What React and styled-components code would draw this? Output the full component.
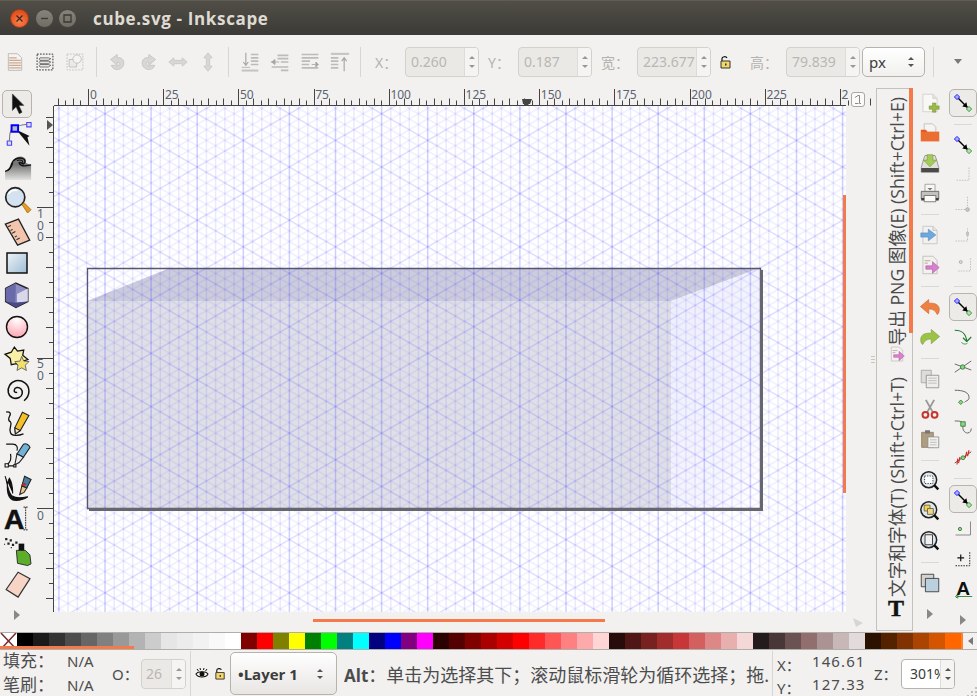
import React from "react";
import styled, { createGlobalStyle } from "styled-components";

const GlobalStyle = createGlobalStyle`
  html, body {
    margin: 0;
    width: 977px;
    height: 696px;
    overflow: hidden;
    background: #f2f1f0;
  }
`;

const UI = '"Open Sans", "Noto Sans CJK SC", sans-serif';
const CJK = '"Noto Sans", "Noto Sans CJK SC", sans-serif';
const COLON = "\uFF1A";
const SEMI = "\uFF1B";

const Window = styled.div`
  width: 977px;
  height: 696px;
  display: flex;
  flex-direction: column;
  overflow: hidden;
  background: #f2f1f0;
  color: #4c4c4c;
  font-family: ${CJK};
`;

const TitleBar = styled.div`
  height: 35px;
  flex: none;
  display: flex;
  align-items: center;
  padding-left: 10px;
  box-sizing: border-box;
  border-top: 1px solid #5f5c52;
  background: linear-gradient(#504e46, #3b3a36);
`;

const WinButton = styled.div`
  width: 19px;
  height: 19px;
  border-radius: 50%;
  margin-right: ${(p) => p.$gap}px;
  display: flex;
  align-items: center;
  justify-content: center;
  box-sizing: border-box;
  border: 1px solid ${(p) => (p.$close ? "#a83a18" : "#46453f")};
  background: ${(p) =>
    p.$close
      ? "radial-gradient(circle at 50% 70%, #f8804e, #e2501f 70%)"
      : "linear-gradient(#85837a, #6f6d64)"};
`;

const Title = styled.div`
  margin-left: 6px;
  color: #dfdbd2;
  font: 700 17px ${UI};
  letter-spacing: 0.65px;
`;

const CommandBar = styled.div`
  height: 53px;
  flex: none;
  display: flex;
  align-items: center;
`;

const TopTool = styled.div`
  width: ${(p) => p.$w || 30}px;
  height: 30px;
  flex: none;
  display: flex;
  align-items: center;
  justify-content: center;
`;

const VSep = styled.div`
  width: 1px;
  height: ${(p) => p.$h || 30}px;
  flex: none;
  margin: 0 ${(p) => p.$r}px 0 ${(p) => p.$l}px;
  background: #d8d6d2;
`;

const Label = styled.div`
  flex: none;
  width: ${(p) => p.$w}px;
  margin-left: ${(p) => p.$ml || 0}px;
  color: ${(p) => (p.$on ? "#4c4c4c" : "#b4b2ae")};
  font-size: ${(p) => (p.$on ? 15 : 14)}px;
  white-space: nowrap;
`;

const Spin = styled.div`
  flex: none;
  display: flex;
  width: ${(p) => p.$w}px;
  height: 30px;
  box-sizing: border-box;
  border: 1px solid ${(p) => (p.$on ? "#b6b3ad" : "#d3d1cc")};
  border-radius: 4px;
  overflow: hidden;
  background: ${(p) => (p.$on ? "#fff" : "#ebe9e6")};
`;

const SpinValue = styled.div`
  flex: 1;
  min-width: 0;
  overflow: hidden;
  white-space: nowrap;
  padding-left: ${(p) => p.$pl || 5}px;
  line-height: 28px;
  font-size: 14px;
  color: ${(p) => (p.$on ? "#3c3c3c" : "#b9b7b3")};
`;

const SpinArrows = styled.div`
  width: 13px;
  flex: none;
  display: flex;
  flex-direction: column;
  align-items: center;
  justify-content: center;
  gap: 6px;
  border-left: 1px solid #dedcd8;
  background: #f5f4f2;
`;

const ArrowUp = styled.div`
  width: 0;
  height: 0;
  border-left: 3px solid transparent;
  border-right: 3px solid transparent;
  border-bottom: 3px solid ${(p) => p.$c || "#9a9894"};
`;

const ArrowDown = styled.div`
  width: 0;
  height: 0;
  border-left: 3px solid transparent;
  border-right: 3px solid transparent;
  border-top: 3px solid ${(p) => p.$c || "#9a9894"};
`;

const UnitSelect = styled.div`
  flex: none;
  width: 63px;
  height: 30px;
  margin-left: 2px;
  box-sizing: border-box;
  padding: 0 10px 0 6px;
  display: flex;
  align-items: center;
  justify-content: space-between;
  border: 1px solid #b6b3ad;
  border-radius: 5px;
  background: linear-gradient(#fff, #f1f0ee);
  font-size: 15px;
  color: #3c3c3c;
`;

const UpDown = styled.div`
  display: flex;
  flex-direction: column;
  gap: 4px;
`;

const MoreArrow = styled.div`
  flex: none;
  margin-left: 20px;
  width: 0;
  height: 0;
  border-left: 4px solid transparent;
  border-right: 4px solid transparent;
  border-top: 5px solid #7b7975;
`;

const Main = styled.div`
  flex: none;
  height: 544px;
  display: flex;
`;

const LeftBar = styled.div`
  width: 37px;
  flex: none;
  box-sizing: border-box;
  padding-right: 3px;
  display: flex;
  flex-direction: column;
`;

const Tool = styled.div`
  flex: none;
  height: ${(p) => p.$h || 32}px;
  display: flex;
  align-items: center;
  justify-content: center;
`;

const Pressed = styled.div`
  width: ${(p) => p.$w}px;
  height: 28px;
  flex: none;
  display: flex;
  align-items: center;
  justify-content: center;
  box-sizing: border-box;
  border: 1px solid #b7b4ae;
  border-radius: 5px;
  background: #ecebe8;
`;

const Triangle = styled.div`
  width: 0;
  height: 0;
  border-top: 5px solid transparent;
  border-bottom: 5px solid transparent;
  border-left: 6px solid #8a8884;
`;

const Workspace = styled.div`
  width: 839px;
  flex: none;
  display: flex;
  flex-direction: column;
`;

const TopRow = styled.div`
  height: 18px;
  flex: none;
  display: flex;
`;

const RulerGap = styled.div`
  width: 17px;
  flex: none;
`;

const CanvasRow = styled.div`
  height: 506px;
  flex: none;
  display: flex;
`;

const BottomRow = styled.div`
  flex: 1;
  position: relative;
`;

const Canvas = styled.div`
  width: 792px;
  flex: none;
  position: relative;
  background: #fff;
`;

const OrangeBar = styled.div`
  position: absolute;
  background: #f47a4b;
`;

const CanvasBar = styled(OrangeBar)`
  right: 0;
  top: 89px;
  width: 3px;
  height: 298px;
`;

const HorizontalBar = styled(OrangeBar)`
  left: 276px;
  top: 7px;
  width: 292px;
  height: 3px;
`;

const DockBar = styled(OrangeBar)`
  right: -1px;
  top: -1px;
  width: 4px;
  height: 245px;
`;

const PaletteBar = styled(OrangeBar)`
  left: 0;
  bottom: 0;
  width: 134px;
  height: 3px;
`;

const ZoomCorner = styled.svg`
  position: absolute;
  left: 815px;
  top: 5px;
`;

const ScrollSide = styled.div`
  flex: 1;
  position: relative;
`;

const Grip = styled.div`
  position: absolute;
  right: 1px;
  top: 250px;
  width: 4px;
  height: 7px;
  background: repeating-linear-gradient(#c8c6c2 0 1px, transparent 1px 3px);
`;

const LockCorner = styled.div`
  width: 14px;
  height: 15px;
  margin: 4px 0 0 5px;
  box-sizing: border-box;
  border: 1px solid #a9a6a0;
  border-radius: 3px;
  background: #fafaf9;
  display: flex;
  align-items: center;
  justify-content: center;
`;

const Dock = styled.div`
  width: 37px;
  flex: none;
  height: 543px;
  box-sizing: border-box;
  border: 1px solid #c5c2bc;
  position: relative;
  display: flex;
  flex-direction: column;
`;

const DockTab = styled.div`
  height: ${(p) => p.$h}px;
  flex: none;
  display: flex;
  flex-direction: column;
  align-items: center;
  padding: ${(p) => p.$pt}px 0 0 5px;
  box-sizing: border-box;
`;

const DockText = styled.div`
  writing-mode: vertical-rl;
  text-orientation: sideways;
  transform: rotate(180deg);
  white-space: nowrap;
  font-size: 17.7px;
  line-height: 20px;
  color: #4a4a4a;
  font-family: ${UI};
`;

const CmdBar = styled.div`
  width: 33px;
  flex: none;
  display: flex;
  flex-direction: column;
`;

const ToolSep = styled.div`
  flex: none;
  height: 12px;
  display: flex;
  align-items: center;
  justify-content: center;

  &::after {
    content: "";
    width: 18px;
    height: 1px;
    background: #dad8d4;
  }
`;

const Palette = styled.div`
  flex: none;
  height: 18px;
  display: flex;
  position: relative;
  overflow: hidden;
  box-sizing: border-box;
  border-top: 1px solid #b0aea9;
  border-bottom: 1px solid #b0aea9;
  background: #f2f1f0;
`;

const Swatch = styled.div`
  flex: none;
  width: ${(p) => p.$w || 16}px;
  background: ${(p) => p.$c};
`;

const PaletteEnd = styled.div`
  flex: none;
  width: 14px;
  margin-left: auto;
  background: #f2f1f0;
  display: flex;
  align-items: center;
  justify-content: center;
`;

const TriangleLeft = styled.div`
  width: 0;
  height: 0;
  border-top: 4px solid transparent;
  border-bottom: 4px solid transparent;
  border-right: 5px solid #7b7975;
`;

const StatusBar = styled.div`
  flex: 1;
  position: relative;
  display: flex;
  align-items: center;
`;

const FillGrid = styled.div`
  width: 108px;
  flex: none;
  padding-left: 3px;
  box-sizing: border-box;
  display: grid;
  grid-template-columns: 64px 1fr;
  grid-auto-rows: 24px;
  align-items: center;
  font-size: 15px;
  line-height: 24px;
  color: #4c4c4c;
  margin-top: -1px;
  white-space: nowrap;
`;

const Cjk = styled.span`
  font-size: 17px;
`;

const Layer = styled.div`
  flex: none;
  width: 107px;
  height: 43px;
  padding: 0 13px 0 7px;
  box-sizing: border-box;
  display: flex;
  align-items: center;
  justify-content: space-between;
  border: 1px solid #b6b3ad;
  border-radius: 5px;
  background: linear-gradient(#fff, #e8e6e3);
  font: 700 15px ${UI};
  color: #3c3c3c;
`;

const Message = styled.div`
  width: 428px;
  flex: none;
  margin-left: 7px;
  overflow: hidden;
  white-space: nowrap;
  font-size: 18px;
  color: #4c4c4c;

  b {
    font: 700 17px ${UI};
  }
`;

const Coords = styled.div`
  width: 93px;
  flex: none;
  height: 46px;
  box-sizing: border-box;
  padding-left: 4px;
  display: grid;
  grid-template-columns: 35px 1fr;
  grid-auto-rows: 23px;
  border-left: 1px solid #d8d6d2;
  font-size: 15px;
`;

const CoordValue = styled.div`
  font-size: 15px;
  letter-spacing: 1.1px;
  line-height: 20px;
  white-space: nowrap;
`;

const CoordKey = styled.div`
  line-height: 28px;
`;

const ResizeGrip = styled.svg`
  position: absolute;
  right: 0;
  bottom: 0;
`;

const VisibleSvg = styled.svg`
  display: block;
  flex: none;
  overflow: visible;
`;

const Icon = ({ size = 20, children }) => (
  <VisibleSvg width={size} height={size} viewBox="0 0 24 24" aria-hidden="true">
    {children}
  </VisibleSvg>
);

const Page = ({ color = "#fff", line = "#aaa" }) => (
  <path d="M3.5 1.5h12l5 5v16h-17z" fill={color} stroke={line} />
);

const PaperShapes = {
  newDoc: (
    <>
      <Page color="#f8f7f5" line="#cfcdc9" />
      <path d="M15.5 1.5v5h5" fill="#e4e3e0" stroke="#cfcdc9" />
      <path d="M15 12h4v3.5h4v4h-4V23h-4v-3.5h-4v-4h4z" fill="#9aba45" stroke="#6d8f2a" strokeWidth=".6" />
    </>
  ),
  open: (
    <>
      <path d="M5 1h10l4 4v8H5z" fill="#f5f4f2" stroke="#bbb" />
      <path d="M1 8h6l2 2.5h14V22H1z" fill="#e4581f" />
      <path d="M1 10.5h22V22H1z" fill="#ef8240" opacity=".55" />
    </>
  ),
  save: (
    <>
      <path d="M4 8.5 6 3h12l2 5.5 2.5 9V23h-21v-5.500z" fill="#e2e0dc" stroke="#8d8b87" />
      <path d="M1.500 18h21v5h-21z" fill="#4a4a48" />
      <path d="M8.500 2h7v6.500H20l-8 8-8-8h4.500z" fill="#a4cb5a" stroke="#75992d" strokeWidth=".7" />
    </>
  ),
  print: (
    <>
      <path d="M6 1.5h12v9H6z" fill="#f7f6f4" stroke="#9b9995" />
      <path d="M1.5 10h21v9h-21z" fill="#c3c1bd" stroke="#5f5d5a" />
      <path d="M5 15h14v7.5H5z" fill="#fbfafa" stroke="#6a6865" />
      <path d="M1.5 18H5v3H1.5zM19 18h3.500v3H19z" fill="#3f3e3c" />
      <path d="M9 6h6l-3 3z" fill="#777" />
    </>
  ),
  importDoc: (
    <>
      <Page color="#f2f1ef" line="#c3c1bd" />
      <path d="M15.5 1.5v5h5" fill="#e4e3e0" stroke="#c3c1bd" />
      <path d="M1 9.5h9V5l9 7-9 7v-4.5H1z" fill="#6fa8dc" stroke="#4d86bd" strokeWidth=".7" />
    </>
  ),
  exportDoc: (
    <>
      <Page color="#f2f1ef" line="#bbb9b5" />
      <path d="M5.5 6h7v1.500h-7zM5.5 9h4v1.500h-4z" fill="#c9b8a6" />
      <path d="M7 13h8V8l8 7-8 7v-5H7z" fill="#d980cf" stroke="#a858a0" strokeWidth=".7" />
    </>
  ),
  undo: (
    <path d="M10.5 3 .5 11.5l10 8.500v-5.500c4.500 0 8 1.500 10 6.500 2-1 3-3 2.500-7.500C22 8 16 7 10.500 7.500z" fill="#ee8040" stroke="#c9602a" strokeWidth=".7" />
  ),
  redo: (
    <path d="M13.5 3l10 8.500-10 8.500v-5.500c-4.500 0-8 1.500-10 6.500-2-1-3-3-2.500-7.500C2 8 8 7 13.500 7.500z" fill="#9cc246" stroke="#769a2d" strokeWidth=".7" />
  ),
  copy: (
    <>
      <path d="M1.5 1.5h12v15h-12z" fill="#dddcd9" stroke="#a5a3a0" />
      <path d="M7.5 7.5h15v15h-15z" fill="#eeedeb" stroke="#8d8b88" />
      <path d="M10 11h10M10 14h10M10 17h10" stroke="#b7b5b2" />
    </>
  ),
  cut: (
    <>
      <path d="M7 1l8.500 15M17 1 8.500 16" stroke="#9a9894" strokeWidth="2.200" fill="none" />
      <circle cx="6.5" cy="19" r="3.5" fill="none" stroke="#c8332d" strokeWidth="2.400" />
      <circle cx="17.5" cy="19" r="3.5" fill="none" stroke="#c8332d" strokeWidth="2.400" />
    </>
  ),
  paste: (
    <>
      <path d="M2 4h14v18H2z" fill="#b09c7e" stroke="#8e7c60" />
      <path d="M6 1.5h6v4H6z" fill="#777" />
      <path d="M9.5 9.5h13v13h-13z" fill="#f2f1ef" stroke="#8d8b88" />
      <path d="M12 13h8M12 16h8M12 19h8" stroke="#b7b5b2" />
    </>
  ),
  duplicate: (
    <>
      <path d="M1.5 1.5h15v15h-15z" fill="#d3d2cf" stroke="#333" />
      <path d="M6.5 6.5h16v16h-16z" fill="#bad0df" stroke="#333" />
    </>
  ),
};

const Lens = ({ children }) => (
  <Icon>
    <circle cx="10.5" cy="10.5" r="9.5" fill="#dbe8f2" stroke="#222" strokeWidth="1.800" />
    {children}
    <path d="M17 17l5 5" stroke="#111" strokeWidth="3" />
  </Icon>
);

const ZoomIcons = {
  selection: (
    <Lens>
      <path d="M5.5 6h10v9h-10z" fill="#fff" stroke="#222" strokeDasharray="1.5 1.5" />
    </Lens>
  ),
  drawing: (
    <Lens>
      <path d="M5 5h7v7H5z" fill="#f3d05a" stroke="#6b5d2a" />
      <path d="M9 9h7v7H9z" fill="#ecd88a" stroke="#6b5d2a" />
    </Lens>
  ),
  page: (
    <Lens>
      <path d="M6 4.5h9v12H6z" fill="#f2f1ef" stroke="#222" />
    </Lens>
  ),
};

const SnapNode = () => (
  <Icon size={18}>
    <path d="M4 4 18 18" stroke="#000" strokeWidth="1.800" />
    <path d="M11 16.5 18 18l-1.5-7z" fill="#000" />
    <path d="M4 .5 7.500 4 4 7.500.5 4z" fill="#a9a9ff" stroke="#22f" strokeWidth="1.300" />
    <path d="M20 16.5 23.500 20 20 23.500 16.500 20z" fill="#b4ddb4" stroke="#3a9a3a" strokeWidth="1.300" />
  </Icon>
);

const Dashed = ({ d, dot }) => (
  <Icon size={18}>
    <path d={d} fill="none" stroke="#c4c2be" strokeWidth="1.400" strokeDasharray="2 1.500" />
    {dot}
  </Icon>
);

const SnapIcons = {
  bbox: <Dashed d="M20 2v17H3" />,
  edge: (
    <Dashed
      d="M18 1v14M2 18h14"
      dot={<circle cx="18" cy="18" r="2.5" fill="#c9c7c3" stroke="#a5a3a0" />}
    />
  ),
  mid: <Dashed d="M2 20h16V3" dot={<path d="M16 8h4v5h-4z" fill="#c4c2be" />} />,
  center: (
    <Dashed
      d="M22 3v17H5"
      dot={<circle cx="9" cy="8" r="2" fill="#dedcd8" stroke="#a5a3a0" />}
    />
  ),
  smooth: (
    <Icon size={18}>
      <path d="M1 3c9 0 15 3 16 15" fill="none" stroke="#1a7a2a" strokeWidth="1.500" />
      <path d="M17 18 12 13M17 18l6-6" fill="none" stroke="#1a7a2a" strokeWidth="1.500" />
      <path d="M10 19c2 3 6 3 8 1" fill="none" stroke="#1a7a2a" strokeWidth="1" />
    </Icon>
  ),
  intersection: (
    <Icon size={18}>
      <path d="M1 19 23 4M1 8l22 8" stroke="#666" strokeWidth="1.300" />
      <circle cx="11.5" cy="12" r="3" fill="#8fd08f" stroke="#1f7a1f" />
    </Icon>
  ),
  cusp: (
    <Icon size={18}>
      <path d="M1 3c10 0 20 2 19 11-1 3-4 3-6 5" fill="none" stroke="#666" strokeWidth="1.300" />
      <path d="M9 16l3 3-3 3-3-3z" fill="#8fd08f" stroke="#1f7a1f" />
    </Icon>
  ),
  corner: (
    <Icon size={18}>
      <path d="M1 4c8 0 12 0 11 8M12 12c-1 3 2 8 6 8s5-4 5-6" fill="none" stroke="#666" strokeWidth="1.300" />
      <path d="M9 5h6v6H9z" fill="#8fd08f" stroke="#1f7a1f" />
    </Icon>
  ),
  hatch: (
    <Icon size={18}>
      <path d="M1 20 23 5" stroke="#555" strokeWidth="1.300" />
      <path d="M5 14l-1 8M8 12 6 20M17 5l-2 8M20 3l-2 8" stroke="#d22" strokeWidth="1.500" />
      <circle cx="12" cy="13" r="2.6" fill="#8fd08f" stroke="#1f7a1f" />
    </Icon>
  ),
  nodeCorner: (
    <Icon size={18}>
      <path d="M22 2v18H2" fill="none" stroke="#888" strokeWidth="1.300" />
      <circle cx="8" cy="12" r="2.2" fill="#8fd08f" stroke="#1f7a1f" />
    </Icon>
  ),
  guide: (
    <Icon size={18}>
      <path d="M21 3v18H2" fill="none" stroke="#222" strokeWidth="1.300" strokeDasharray="2 1.500" />
      <path d="M9 6v9M4.5 10.5h9" stroke="#111" strokeWidth="1.600" />
    </Icon>
  ),
  text: (
    <Icon size={20}>
      <path d="M5 19l-2 2 2 2 2-2zM5 21h18" stroke="#1f7a1f" fill="#8fd08f" strokeWidth="1" />
      <text x="4" y="19" fontFamily="Liberation Sans" fontWeight="700" fontSize="23" fill="#111">A</text>
    </Icon>
  ),
};

const ToolIcons = {
  select: (
    <Icon size={22}>
      <path d="M7 1v18l4-4 3.5 7.500 3-1.500-3.500-7.500h5.500z" fill="#111" stroke="#333" strokeWidth=".6" />
    </Icon>
  ),
  node: (
    <Icon size={26}>
      <path d="M5 17C5 10 6 5 10 4.5 14 3 19 2.5 22 2" fill="none" stroke="#777" />
      <path d="M11.5 7 22 23l-1-8 2-1z" fill="#111" transform="rotate(-6 12 8)" />
      <path d="M7 3h6v6H7z" fill="#bbb" stroke="#00f" strokeWidth="1.800" />
      <path d="M21 .5h4v4h-4zM3 17.500h4v4H3z" fill="#dde" stroke="#44f" />
    </Icon>
  ),
  tweak: (
    <Icon size={26}>
      <defs>
        <linearGradient id="tweakg" x1="0" y1="0" x2="0" y2="1">
          <stop offset=".35" stopColor="#777" />
          <stop offset="1" stopColor="#e2e2e0" />
        </linearGradient>
      </defs>
      <path d="M1 24v-8c4-1 5-3 6-7 1-5 7-8 11-6 2 1 3 3 2 5 2 1 4 2 5 2v14H1z" fill="url(#tweakg)" />
      <path d="M1 16c4-1 5-3 6-7 1-4 6-6 10-5 3 1 3 4 1 5-2 0-3-2-4-1 0 2 3 3 5 3 3 0 5-1 6-1" fill="none" stroke="#111" strokeWidth="1.300" />
      <path d="M3.5 15c3-2 4-4 4.500-7M12 6c3-1 6 0 5 2" fill="none" stroke="#111" strokeWidth="1" />
    </Icon>
  ),
  zoom: (
    <Icon size={27}>
      <circle cx="10" cy="10" r="8.5" fill="#d3e2ee" stroke="#222" strokeWidth="1.500" />
      <path d="M4 7c2-3 5-4 8-3" fill="none" stroke="#fff" strokeWidth="1.500" />
      <path d="M16 16.5l2-1.500 6 6-3 3z" fill="#e99b1c" stroke="#9b6510" strokeWidth=".7" />
    </Icon>
  ),
  measure: (
    <Icon size={26}>
      <path d="M1 6 13 1l11 19-11 5z" transform="rotate(2 12 12)" fill="#f3c5ad" stroke="#222" strokeWidth="1.200" />
      <path d="M3.5 8l3-1M6 11.5l2-1M7.5 14l3-1.500M10 17.500l2-1M11.500 20l3-1.500" stroke="#333" />
    </Icon>
  ),
  rect: (
    <Icon size={24}>
      <defs>
        <linearGradient id="rectg" x1="0" y1="0" x2="1" y2="1">
          <stop offset="0" stopColor="#eef3f7" />
          <stop offset="1" stopColor="#9dbdd6" />
        </linearGradient>
      </defs>
      <path d="M2 2h20v20H2z" fill="url(#rectg)" stroke="#111" strokeWidth="1.500" />
    </Icon>
  ),
  box: (
    <Icon size={26}>
      <path d="M11 1l11 5v12l-11 5.5L1.5 18V6z" fill="#8e8ec4" stroke="#222" strokeWidth="1.300" />
      <path d="M11 1 1.5 6v12l9 1z" fill="#6a6aa8" />
      <path d="M12 11 22 6v12l-10 1z" fill="#d8d8ea" />
      <path d="M10.5 19 1.5 18l9.500 5.500L22 18l-10 1z" fill="#4a4a88" />
    </Icon>
  ),
  circle: (
    <Icon size={24}>
      <defs>
        <radialGradient id="circg" cx=".5" cy=".15" r=".9">
          <stop offset="0" stopColor="#fff" />
          <stop offset="1" stopColor="#ffa0ad" />
        </radialGradient>
      </defs>
      <circle cx="12" cy="12" r="10.5" fill="url(#circg)" stroke="#111" strokeWidth="1.400" />
    </Icon>
  ),
  star: (
    <Icon size={25}>
      <path d="M9 1l3 4 6-1-1 5 5 4-6 2-1 5-4-3-5 1-1-6-5-4 6-2z" transform="translate(0 -1)" fill="#f7f0a6" stroke="#111" strokeWidth="1.200" />
      <path d="M16 9l2 4.500 5 .5-3.500 3.500 1 5-4.500-2.500-4.500 2.500 1-5L9.500 14l5-.5z" fill="#f2e06c" stroke="#555" strokeWidth=".8" />
    </Icon>
  ),
  spiral: (
    <Icon size={26}>
      <path d="M12 13c-1 1-3 0-2.500-2 .5-2.500 4-3 6-1 2.500 2.500 1.500 6.500-1.500 8-4 2-9 0-10-4.500S6 3.500 11 2.500c6-1 12 3 12 9.500 0 4-2 7-4.500 9" fill="none" stroke="#111" strokeWidth="1.400" />
    </Icon>
  ),
  pencil: (
    <Icon size={26}>
      <path d="M17 2l6 3-8 14-4.500 3-.5-5.500z" fill="#f3c02a" stroke="#222" />
      <path d="M10 16.5l.5 5.500 4.500-3z" fill="#f7e3c0" stroke="#222" />
      <path d="M2 2c3-1 5 1 3 4-1 2-1 4 1 5 2 2-2 6 0 10 1 3 7 3 12 1" fill="none" stroke="#111" strokeWidth="1.200" />
    </Icon>
  ),
  pen: (
    <Icon size={26}>
      <path d="M18 2c2-1 5 0 6 3l-6 9-6-3z" fill="#6fb4d6" stroke="#222" />
      <path d="M12 11l6 3-4 5-4 2z" fill="#eee" stroke="#222" />
      <path d="M2 2h6c4 0 5 3 4 6M3 21c3-3 4-5 3-10M4 22h6" fill="none" stroke="#111" strokeWidth="1.100" />
      <path d="M1 20h3v3H1zM9 21h2v2H9z" fill="#fff" stroke="#111" />
    </Icon>
  ),
  callig: (
    <Icon size={26}>
      <path d="M19 2l6 3-4 8-4.500-2z" fill="#4a7f9f" stroke="#222" />
      <path d="M20 9l-3.500 1.500" stroke="#c8202a" strokeWidth="2" />
      <path d="M16.5 11l4.500 2-2.500 4-4 2z" fill="#f3c58a" stroke="#222" />
      <path d="M1 2c2 5 2 13 6 18 5 3 10 2 15 1-4 3-10 4-14 3C2 21 2 9 5 4c2 3 3 8 3 14" fill="#111" stroke="#111" />
    </Icon>
  ),
  text: (
    <Icon size={26}>
      <text x="0" y="21" fontFamily="Liberation Sans" fontWeight="700" fontSize="26" fill="#111" stroke="#111" strokeWidth=".5">A</text>
      <path d="M18 1h4M20 1v21M18 22h4" stroke="#222" fill="none" strokeWidth=".9" strokeDasharray="1.500 .8" />
    </Icon>
  ),
  spray: (
    <Icon size={27}>
      <path d="M11 11h8l4 4 1 8-3 1.500-9-2z" fill="#5cae2a" stroke="#222" strokeWidth=".8" />
      <path d="M13 5h5v6h-5z" fill="#111" />
      <path d="M1 0h2v2H1zM5 1h2v2H5zM3 4h2v2H3zM7 5h2v2H7zM10 3h2v2h-2zM0 5h1v1H0zM6 8h1v1H6z" fill="#222" />
    </Icon>
  ),
  eraser: (
    <Icon size={26}>
      <path d="M13 2l11 6-11 17L2 18z" fill="#f7d4c5" stroke="#333" strokeWidth="1.100" />
    </Icon>
  ),
};

const DimIcons = {
  page: (
    <Icon>
      <path d="M4 2h11l5 5v15H4z" fill="#f5f3ef" stroke="#b6b3ac" />
      <path d="M5 7h9M5 10h14M5 13h14M5 16h14M5 19h14" stroke="#c9a994" strokeWidth="1.700" />
    </Icon>
  ),
  selectAll: (
    <Icon>
      <path d="M2.5 2.5h19v19h-19z" fill="none" stroke="#111" strokeDasharray="2 1.500" />
      <path d="M6 7h10l3 1-3 2H6l-1-1.500zM6 11h10l3 1-3 2H6l-1-1.500zM6 15h10l3 1-3 2H6l-1-1.500z" fill="#e8e6e3" stroke="#444" strokeWidth=".8" />
    </Icon>
  ),
  selectOff: (
    <Icon>
      <path d="M2.5 2.5h19v19h-19z" fill="none" stroke="#bbb" strokeDasharray="2 1.500" />
      <path d="M5 9h9v9H5z" fill="#eceae7" stroke="#bbb" />
      <circle cx="14.5" cy="8.5" r="5" fill="#f5f4f2" stroke="#bbb" />
    </Icon>
  ),
  rotL: (
    <Icon>
      <path d="M11 3v4c5-1 8 2 8 6.500S15 21 11 21s-6-2-7-5h5c1 1 3 1 4 0s1-4-2-4v4L3 9z" fill="#d9d7d3" stroke="#c4c2be" />
    </Icon>
  ),
  rotR: (
    <Icon>
      <path d="M13 3v4c-5-1-8 2-8 6.500S9 21 13 21s6-2 7-5h-5c-1 1-3 1-4 0s-1-4 2-4v4l8-7z" fill="#d9d7d3" stroke="#c4c2be" />
    </Icon>
  ),
  flipH: (
    <Icon>
      <path d="M1 12l6-5v3h10V7l6 5-6 5v-3H7v3z" fill="#d9d7d3" stroke="#c9c7c3" />
    </Icon>
  ),
  flipV: (
    <Icon>
      <path d="M12 1l5 6h-3v10h3l-5 6-5-6h3V7H7z" fill="#d9d7d3" stroke="#c9c7c3" />
    </Icon>
  ),
  lower: (
    <Icon>
      <path d="M2 21h20v2.500H2z" fill="#c6c4c0" />
      <path d="M13 3h9M13 7h9M13 11h9M13 15h9" stroke="#bdbbb7" strokeWidth="2" />
      <path d="M7 1v14M4 12l3 4 3-4" fill="none" stroke="#a8a6a2" strokeWidth="1.400" />
      <path d="M2 18.5h10" stroke="#c6c4c0" strokeWidth="1.500" />
    </Icon>
  ),
  lowerOne: (
    <Icon>
      <path d="M9 4h13M2 18h20M9 8h13" stroke="#bdbbb7" strokeWidth="2" />
      <path d="M1 12h10M2 12l4-3v6z" fill="#a8a6a2" stroke="#a8a6a2" />
      <path d="M13 12h9M13 22h9" stroke="#bdbbb7" strokeWidth="2" />
    </Icon>
  ),
  raiseOne: (
    <Icon>
      <path d="M2 3h20M2 7h20M2 11h10M2 15h9M2 19h20" stroke="#bdbbb7" strokeWidth="2" />
      <path d="M14 15h8M22 15l-3-3v6z" fill="#a8a6a2" stroke="#a8a6a2" />
    </Icon>
  ),
  raise: (
    <Icon>
      <path d="M1 1h22v2.500H1z" fill="#c6c4c0" />
      <path d="M1 7h9M1 11h9M1 15h9M1 19h9" stroke="#bdbbb7" strokeWidth="2" />
      <path d="M17 23V8M14 11l3-4 3 4" fill="none" stroke="#a8a6a2" strokeWidth="1.400" />
    </Icon>
  ),
};

const Lock = ({ size = 14 }) => (
  <svg width={size} height={size} viewBox="0 0 14 14" aria-hidden="true">
    <path d="M3 6V3.500C3 1.500 7 1 8 3" fill="none" stroke="#111" strokeWidth="1.200" />
    <path d="M2 6h9v7H2z" fill="#f3d76a" stroke="#333" />
    <path d="M6 8.500h1.500v2H6z" fill="#333" />
  </svg>
);

const Eye = () => (
  <svg width="14" height="14" viewBox="0 0 14 14" aria-hidden="true">
    <path d="M1 7c2-3 10-3 12 0-2 4-10 4-12 0z" fill="#fff" stroke="#111" strokeWidth="1.100" />
    <circle cx="7" cy="7" r="2.500" fill="#111" />
    <path d="M2 2l1.500 2M5 1l.5 2M9 1l-.5 2M12 2l-1.500 2" stroke="#111" />
  </svg>
);

const GRID_W = 792;
const GRID_H = 506;
const STEP = 9.22;
const SLOPE = 0.57735;
const DIAG = STEP * 2 * SLOPE;

// isometric grid, one major line every fifth one
const gridLines = () => {
  const lines = [];
  const ox = 105 - 54;
  for (let i = -10; i * STEP < GRID_W; i++) {
    const x = ox + i * STEP;
    if (x < 0) continue;
    const major = i % 5 === 0;
    lines.push({ k: `v${i}`, d: `M${x} -1V${GRID_H}`, o: major ? 0.25 : 0.11, w: 1.5 });
  }
  const oy = 167 - 107;
  for (let i = -150; i < 150; i++) {
    const y0 = oy + i * DIAG;
    const major = i % 5 === 0;
    const a1 = y0 - SLOPE * ox;
    const a2 = y0 + SLOPE * ox;
    const o = major ? 0.16 : 0.065;
    const w = major ? 1.6 : 1.9;
    lines.push({ k: `a${i}`, d: `M0 ${a1}L${GRID_W} ${a1 + SLOPE * GRID_W}`, o, w });
    lines.push({ k: `b${i}`, d: `M0 ${a2}L${GRID_W} ${a2 - SLOPE * GRID_W}`, o, w });
  }
  return lines;
};

const Drawing = () => {
  const lines = gridLines();
  return (
    <svg
      width={GRID_W}
      height={GRID_H}
      viewBox={`0 -1 ${GRID_W} ${GRID_H}`}
      style={{ display: "block" }}
    >
      <defs>
        <linearGradient id="sideg" x1="0" y1="0" x2="1" y2="1">
          <stop offset="0" stopColor="#e6e6fa" stopOpacity=".7" />
          <stop offset=".7" stopColor="#f2f2fd" stopOpacity=".7" />
          <stop offset=".95" stopColor="#fff" stopOpacity=".9" />
        </linearGradient>
      </defs>
      <path d="M33 194 116 161H706L617 194z" fill="#6a6a9c" fillOpacity=".34" />
      <path d="M33 194H617V401H33z" fill="#6e6e90" fillOpacity=".22" />
      <path d="M617 194 706 161V401H617z" fill="url(#sideg)" />
      {lines.map((l) => (
        <path
          key={l.k}
          d={l.d}
          fill="none"
          stroke="#4040ff"
          strokeOpacity={l.o}
          strokeWidth={l.w}
        />
      ))}
      <path d="M33.5 161.5H706.5V401.5H33.5z" fill="none" stroke="#55556e" strokeWidth="1.300" />
      <path d="M706 163h3v241H35v-3h671z" fill="#66666e" />
    </svg>
  );
};

const Ticks = () => {
  const ticks = [];
  const labels = [
    [88, "0"],
    [163, "25"],
    [238, "50"],
    [313.2, "75"],
    [388.4, "100"],
    [463.6, "125"],
    [538.8, "150"],
    [614, "175"],
    [689.2, "200"],
    [764.4, "225"],
    [839.6, "2"],
  ];
  for (let i = -4; i < 105; i++) {
    const x = 88 + i * 7.52;
    const major = i % 10 === 0;
    const mid = i % 2 === 0;
    ticks.push(
      <path
        key={i}
        d={`M${Math.round(x - 54) + 0.5} 17.5V${major ? 1 : mid ? 10.5 : 12.5}`}
        stroke="#444"
      />
    );
  }
  return (
    <VisibleSvg width="792" height="18">
      {ticks}
      <path d="M0 17.5H792" stroke="#444" />
      {labels.map(([x, t]) => (
        <text key={t} x={x - 54 + 2} y="11" fontFamily="Noto Sans" fontSize="12" fill="#5a6470">
          {t}
        </text>
      ))}
      <path d="M468 11h10l-2 5h-1l-1 1h-3l-1-1h-1z" fill="#444" />
    </VisibleSvg>
  );
};

const SideRuler = () => {
  const ticks = [];
  for (let i = -6; i < 34; i++) {
    const y = 508 - 107 - i * 15.05;
    const major = i % 10 === 0;
    const long = i % 2 === 0;
    if (y > 505 || y < 0) continue;
    ticks.push(
      <path
        key={i}
        d={`M${major ? 0 : long ? 9 : 12} ${Math.round(y) + 0.5}H17`}
        stroke="#444"
      />
    );
  }
  const groups = [
    [111, ["1", "0", "0"]],
    [261, ["5", "0"]],
    [413, ["0"]],
  ];
  return (
    <VisibleSvg width="17" height="506" viewBox="0 -1 17 506">
      {ticks}
      <path d="M16.5 -1V505" stroke="#444" />
      {groups.map(([y, chars]) =>
        chars.map((c, i) => (
          <text key={`${y}${i}`} x="0" y={y + i * 11.5} fontFamily="Noto Sans" fontSize="12" fill="#5a6470">
            {c}
          </text>
        ))
      )}
      <path d="M10 13l6 5-6 5z" fill="#555" />
    </VisibleSvg>
  );
};

const swatches = [
  "#000000", "#1a1a1a", "#333333", "#4d4d4d", "#666666", "#808080", "#999999", "#b3b3b3",
  "#cccccc", "#e6e6e6", "#ececec", "#f2f2f2", "#f9f9f9", "#ffffff", "#800000", "#ff0000",
  "#808000", "#ffff00", "#008000", "#00ff00", "#008080", "#00ffff", "#000080", "#0000ff",
  "#800080", "#ff00ff", "#2b0000", "#550000", "#800000", "#aa0000", "#d40000", "#ff0000",
  "#ff2a2a", "#ff5555", "#ff8080", "#ffaaaa", "#ffd5d5", "#280b0b", "#501616", "#782121",
  "#a02c2c", "#c83737", "#d35f5f", "#de8787", "#e9afaf", "#f4d7d7", "#241c1c", "#483737",
  "#6c5353", "#916f6f", "#ac9393", "#c8b7b7", "#e3dbdb", "#2b1100", "#552200", "#803300",
  "#aa4400", "#d45500", "#ff6600",
];

const SpinBox = ({ w, value, on, pl }) => (
  <Spin $w={w} $on={on}>
    <SpinValue $on={on} $pl={pl}>{value}</SpinValue>
    <SpinArrows>
      <ArrowUp $c={on ? "#555" : undefined} />
      <ArrowDown $c={on ? "#555" : undefined} />
    </SpinArrows>
  </Spin>
);

const App = () => (
  <Window>
    <GlobalStyle />
    <TitleBar>
      <WinButton $close $gap={6}>
        <svg width="9" height="9" viewBox="0 0 9 9">
          <path d="M1.5 1.5l6 6M7.5 1.5l-6 6" stroke="#3a2a20" strokeWidth="1.200" />
        </svg>
      </WinButton>
      <WinButton $gap={4}>
        <svg width="9" height="9" viewBox="0 0 9 9">
          <path d="M1 4.5h7" stroke="#3a3933" strokeWidth="1.300" />
        </svg>
      </WinButton>
      <WinButton $gap={10}>
        <svg width="9" height="9" viewBox="0 0 9 9">
          <path d="M1 1h7v7H1z" fill="none" stroke="#3a3933" strokeWidth="1.300" />
        </svg>
      </WinButton>
      <Title>cube.svg - Inkscape</Title>
    </TitleBar>

    <CommandBar>
      <TopTool>{DimIcons.page}</TopTool>
      <TopTool>{DimIcons.selectAll}</TopTool>
      <TopTool>{DimIcons.selectOff}</TopTool>
      <VSep $l={6} $r={6} />
      <TopTool>{DimIcons.rotL}</TopTool>
      <TopTool>{DimIcons.rotR}</TopTool>
      <TopTool>{DimIcons.flipH}</TopTool>
      <TopTool>{DimIcons.flipV}</TopTool>
      <VSep $l={5} $r={6} />
      <TopTool>{DimIcons.lower}</TopTool>
      <TopTool>{DimIcons.lowerOne}</TopTool>
      <TopTool>{DimIcons.raiseOne}</TopTool>
      <TopTool>{DimIcons.raise}</TopTool>
      <VSep $l={5} $r={0} />
      <Label $w={30} $ml={14}>X{COLON}</Label>
      <SpinBox w={74} value="0.260" />
      <Label $w={30} $ml={9}>Y{COLON}</Label>
      <SpinBox w={74} value="0.187" />
      <Label $w={36} $ml={9}>宽{COLON}</Label>
      <SpinBox w={74} value="223.677" />
      <TopTool><Lock /></TopTool>
      <Label $w={36} $ml={9}>高{COLON}</Label>
      <SpinBox w={74} value="79.839" />
      <UnitSelect>
        px
        <UpDown><ArrowUp $c="#555" /><ArrowDown $c="#555" /></UpDown>
      </UnitSelect>
      <VSep $l={8} $r={0} />
      <MoreArrow />
    </CommandBar>

    <Main>
      <LeftBar>
        <Tool $h={31}><Pressed $w={30}>{ToolIcons.select}</Pressed></Tool>
        <Tool>{ToolIcons.node}</Tool>
        <Tool>{ToolIcons.tweak}</Tool>
        <Tool>{ToolIcons.zoom}</Tool>
        <Tool>{ToolIcons.measure}</Tool>
        <Tool>{ToolIcons.rect}</Tool>
        <Tool>{ToolIcons.box}</Tool>
        <Tool>{ToolIcons.circle}</Tool>
        <Tool>{ToolIcons.star}</Tool>
        <Tool>{ToolIcons.spiral}</Tool>
        <Tool>{ToolIcons.pencil}</Tool>
        <Tool>{ToolIcons.pen}</Tool>
        <Tool>{ToolIcons.callig}</Tool>
        <Tool>{ToolIcons.text}</Tool>
        <Tool>{ToolIcons.spray}</Tool>
        <Tool>{ToolIcons.eraser}</Tool>
        <Tool><Triangle /></Tool>
      </LeftBar>

      <Workspace>
        <TopRow>
          <RulerGap />
          <Ticks />
          <LockCorner>
            <svg width="8" height="11" viewBox="0 0 8 11">
              <path d="M1 3.5 4 1.500h1.500v8H7M1 9.500h3.500" fill="none" stroke="#8a8884" />
            </svg>
          </LockCorner>
        </TopRow>
        <CanvasRow>
          <SideRuler />
          <Canvas>
            <Drawing />
            <CanvasBar />
          </Canvas>
          <ScrollSide><Grip /></ScrollSide>
        </CanvasRow>
        <BottomRow>
          <HorizontalBar />
          <ZoomCorner width="12" height="11" viewBox="0 0 12 11">
            <path d="M1 1 11 6 4 10z" fill="#d6d6d2" />
          </ZoomCorner>
        </BottomRow>
      </Workspace>

      <Dock>
        <DockBar />
        <DockTab $h={286} $pt={8}>
          <DockText>导出 PNG 图像(E) (Shift+Ctrl+E)</DockText>
          <Icon size={16}>{PaperShapes.exportDoc}</Icon>
        </DockTab>
        <DockTab $h={256} $pt={2}>
          <DockText>文字和字体(T) (Shift+Ctrl+T)</DockText>
          <VisibleSvg width="22" height="20" viewBox="0 0 22 20">
            <text x="2" y="19" fontFamily="Liberation Serif" fontWeight="700" fontSize="24" fill="#111" stroke="#111" strokeWidth=".4">T</text>
          </VisibleSvg>
        </DockTab>
      </Dock>

      <CmdBar>
        <Tool $h={30}><Icon>{PaperShapes.newDoc}</Icon></Tool>
        <Tool $h={30}><Icon>{PaperShapes.open}</Icon></Tool>
        <Tool $h={30}><Icon>{PaperShapes.save}</Icon></Tool>
        <Tool $h={30}><Icon>{PaperShapes.print}</Icon></Tool>
        <ToolSep />
        <Tool $h={30}><Icon>{PaperShapes.importDoc}</Icon></Tool>
        <Tool $h={30}><Icon>{PaperShapes.exportDoc}</Icon></Tool>
        <ToolSep />
        <Tool $h={30}><Icon>{PaperShapes.undo}</Icon></Tool>
        <Tool $h={30}><Icon>{PaperShapes.redo}</Icon></Tool>
        <ToolSep />
        <Tool $h={30}><Icon>{PaperShapes.copy}</Icon></Tool>
        <Tool $h={30}><Icon>{PaperShapes.cut}</Icon></Tool>
        <Tool $h={30}><Icon>{PaperShapes.paste}</Icon></Tool>
        <ToolSep />
        <Tool $h={30}>{ZoomIcons.selection}</Tool>
        <Tool $h={30}>{ZoomIcons.drawing}</Tool>
        <Tool $h={30}>{ZoomIcons.page}</Tool>
        <ToolSep />
        <Tool $h={30}><Icon>{PaperShapes.duplicate}</Icon></Tool>
        <Tool $h={32}><Triangle /></Tool>
      </CmdBar>

      <CmdBar>
        <Tool $h={30}><Pressed $w={28}><SnapNode /></Pressed></Tool>
        <ToolSep />
        <Tool $h={30}><SnapNode /></Tool>
        <Tool $h={30}>{SnapIcons.bbox}</Tool>
        <Tool $h={30}>{SnapIcons.edge}</Tool>
        <Tool $h={30}>{SnapIcons.mid}</Tool>
        <Tool $h={30}>{SnapIcons.center}</Tool>
        <ToolSep />
        <Tool $h={30}><Pressed $w={28}><SnapNode /></Pressed></Tool>
        <Tool $h={30}>{SnapIcons.smooth}</Tool>
        <Tool $h={30}>{SnapIcons.intersection}</Tool>
        <Tool $h={30}>{SnapIcons.cusp}</Tool>
        <Tool $h={30}>{SnapIcons.corner}</Tool>
        <Tool $h={30}>{SnapIcons.hatch}</Tool>
        <ToolSep />
        <Tool $h={30}><Pressed $w={28}><SnapNode /></Pressed></Tool>
        <Tool $h={30}>{SnapIcons.nodeCorner}</Tool>
        <Tool $h={30}>{SnapIcons.guide}</Tool>
        <Tool $h={30}>{SnapIcons.text}</Tool>
        <Tool $h={32}><Triangle /></Tool>
      </CmdBar>
    </Main>

    <Palette>
      <Swatch $c="#fff" $w={17}>
        <svg width="17" height="16" viewBox="0 0 17 16" style={{ display: "block" }}>
          <path d="M1 0 16 16M16 0 1 16" stroke="#7a2a2a" strokeWidth="1.500" />
        </svg>
      </Swatch>
      {swatches.map((c, i) => (
        <Swatch key={i} $c={c} />
      ))}
      <Swatch $c="#ff7f2a" $w={2} />
      <PaletteEnd><TriangleLeft /></PaletteEnd>
      <PaletteBar />
    </Palette>

    <StatusBar>
      <FillGrid>
        <Cjk>填充{COLON}</Cjk>
        <span>N/A</span>
        <Cjk>笔刷{COLON}</Cjk>
        <span>N/A</span>
      </FillGrid>
      <Label $w={29} $ml={4} $on>O{COLON}</Label>
      <SpinBox w={45} value="26" pl={4} />
      <VSep $l={4} $r={1} $h={46} />
      <TopTool $w={19}><Eye /></TopTool>
      <TopTool $w={19}><Lock size={13} /></TopTool>
      <Layer>
        •Layer 1
        <UpDown><ArrowUp $c="#555" /><ArrowDown $c="#555" /></UpDown>
      </Layer>
      <Message>
        <b>Alt</b>{COLON}单击为选择其下{SEMI}滚动鼠标滑轮为循环选择{SEMI}拖.
      </Message>
      <Coords>
        <CoordKey>X{COLON}</CoordKey>
        <CoordValue>146.61</CoordValue>
        <CoordKey>Y{COLON}</CoordKey>
        <CoordValue>127.33</CoordValue>
      </Coords>
      <Label $w={27} $ml={9} $on>Z{COLON}</Label>
      <SpinBox w={54} value="301%" on pl={8} />
      <ResizeGrip width="11" height="11" viewBox="0 0 11 11">
        <path d="M9 9h2v2H9zM5 9h2v2H5zM1 9h2v2H1zM9 5h2v2H9zM5 5h2v2H5zM9 1h2v2H9z" fill="#c4c2be" />
      </ResizeGrip>
    </StatusBar>
  </Window>
);

export default App;
